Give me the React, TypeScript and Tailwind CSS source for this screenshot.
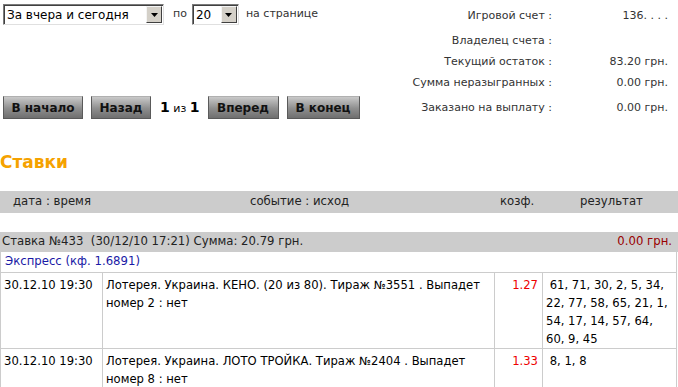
import { useState } from "react";

// --- DATA ---
const ACCOUNT = [
  { label: "Игровой счет :", value: "136. . . .", h: "h-[28px]" },
  { label: "Владелец счета :", value: "", h: "h-[22px]" },
  { label: "Текущий остаток :", value: "83.20 грн.", h: "h-[21px]" },
  { label: "Сумма неразыгранных :", value: "0.00 грн.", h: "h-[21px]" },
  { label: "Заказано на выплату :", value: "0.00 грн.", h: "h-[29px]" },
];

const BETS = [
  {
    date: "30.12.10 19:30",
    event: "Лотерея. Украина. КЕНО. (20 из 80). Тираж №3551 . Выпадет номер 2 : нет",
    coef: "1.27",
    result: "61, 71, 30, 2, 5, 34, 22, 77, 58, 65, 21, 1, 54, 17, 14, 57, 64, 60, 9, 45",
    h: "h-[75px]",
  },
  {
    date: "30.12.10 19:30",
    event: "Лотерея. Украина. ЛОТО ТРОЙКА. Тираж №2404 . Выпадет номер 8 : нет",
    coef: "1.33",
    result: "8, 1, 8",
    h: "h-[40px]",
  },
];

function FakeSelect({ value, width }: { value: string; width: string }) {
  return (
    <div className={`flex items-stretch h-[21px] ${width} bg-white border border-t-[#7a7a7a] border-l-[#7a7a7a] border-r-[#e0e0e0] border-b-[#e0e0e0] shadow-[inset_1px_1px_0_#404040]`}>
      <span className="flex-1 pl-[3px] pt-[2px] text-[12px] leading-[16px] text-black">{value}</span>
      <span className="w-[16px] m-[1px] flex items-center justify-center bg-[#d4d0c8] border border-t-[#f4f4f4] border-l-[#f4f4f4] border-r-[#404040] border-b-[#404040]">
        <svg width="7" height="4" viewBox="0 0 7 4">
          <path d="M0 0h7L3.5 4z" fill="#000" />
        </svg>
      </span>
    </div>
  );
}

function GrayButton({ text, width }: { text: string; width: string }) {
  return (
    <button className={`${width} h-[23px] bg-[linear-gradient(#c9c9c9,#8e8e8e_55%,#6f6f6f)] border border-[#5a5a5a] border-t-[#b0b0b0] text-[12px] font-bold text-[#111] leading-[20px] text-center`}>
      {text}
    </button>
  );
}

export default function App() {
  const [period] = useState("За вчера и сегодня");

  return (
    <div className="w-[678px] h-[387px] overflow-hidden bg-white font-['DejaVu_Sans',Tahoma,sans-serif] text-[11px] text-[#333]">
      {/* --- TOP: filters + account --- */}
      <div className="flex h-[125px]">
        <div className="w-[380px] flex flex-col justify-between pl-[3px] pt-[4px] pb-[6px]">
          <div className="flex items-center">
            <FakeSelect value={period} width="w-[161px]" />
            <span className="ml-[9px] mr-[5px]">по</span>
            <FakeSelect value="20" width="w-[47px]" />
            <span className="ml-[7px]">на странице</span>
          </div>

          <div className="flex items-center">
            <GrayButton text="В начало" width="w-[80px]" />
            <GrayButton text="Назад" width="w-[60px] ml-[8px]" />
            <span className="ml-[9px] mr-[8px] text-black">
              <b className="text-[14px]">1</b> из <b className="text-[14px]">1</b>
            </span>
            <GrayButton text="Вперед" width="w-[71px]" />
            <GrayButton text="В конец" width="w-[73px] ml-[8px]" />
          </div>
        </div>

        <div className="flex-1 pt-[2px]">
          {ACCOUNT.map((row) => (
            <div key={row.label} className={`flex items-center ${row.h}`}>
              <span className="w-[172px] text-right">{row.label}</span>
              <span className="flex-1 text-right pr-[10px]">{row.value}</span>
            </div>
          ))}
        </div>
      </div>

      {/* --- SECTION TITLE --- */}
      <div className="h-[66px] pt-[26px]">
        <h2 className="font-['DejaVu_Sans',sans-serif] text-[17px] font-bold text-[#f5a200] leading-[22px]">Ставки</h2>
      </div>

      {/* --- COLUMN HEADER --- */}
      <div className="flex items-center h-[22px] bg-[#cccccc] text-[11.7px] text-[#222]">
        <span className="w-[250px] pl-[13px]">дата : время</span>
        <span className="w-[250px]">событие : исход</span>
        <span className="w-[80px]">козф.</span>
        <span>результат</span>
      </div>

      {/* --- BET --- */}
      <div className="mt-[19px]">
        <div className="flex items-center justify-between h-[20px] bg-[#cccccc] px-[2px] text-[11.7px]">
          <span className="text-[#222]">Ставка №433&nbsp; (30/12/10 17:21) Сумма: 20.79 грн.</span>
          <span className="text-[#990000] pr-[4px]">0.00 грн.</span>
        </div>

        <table className="w-[677px] border-collapse text-[11.6px] text-black">
          <tbody>
            <tr>
              <td colSpan={4} className="h-[20px] border border-[#cccccc] border-t-0 pl-[4px] text-[11.7px] text-[#1a1aa6]">
                Экспресс (кф. 1.6891)
              </td>
            </tr>
            {BETS.map((bet, i) => (
              <tr key={i} className={`${bet.h} align-top leading-[18px]`}>
                <td className="w-[102px] border border-[#cccccc] pl-[3px] pt-[3px]">{bet.date}</td>
                <td className="w-[392px] border border-[#cccccc] pl-[3px] pt-[3px]">{bet.event}</td>
                <td className="w-[48px] border border-[#cccccc] pr-[4px] pt-[3px] text-right text-[#ee0000]">{bet.coef}</td>
                <td className="border border-[#cccccc] pl-[3px] pr-[4px] pt-[3px]">&nbsp;{bet.result}</td>
              </tr>
            ))}
          </tbody>
        </table>
      </div>
    </div>
  );
}
